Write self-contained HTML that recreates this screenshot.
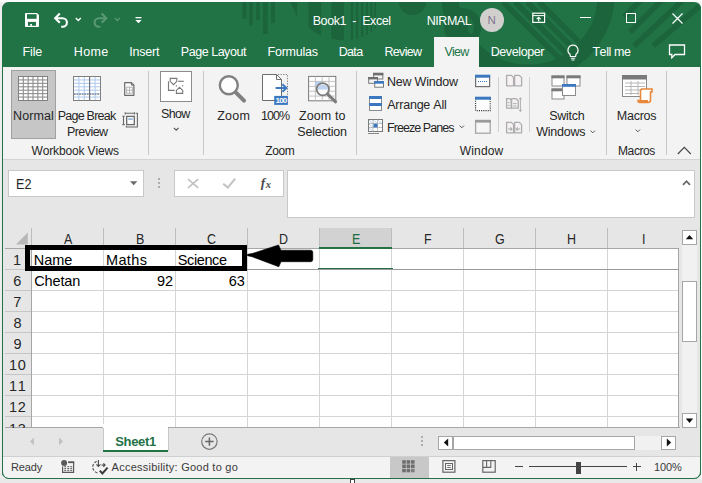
<!DOCTYPE html>
<html lang="en"><head><meta charset="utf-8"><title>Book1 - Excel</title>
<style>
html,body{margin:0;padding:0}
body{width:702px;height:483px;overflow:hidden;background:#fff;position:relative;font-family:"Liberation Sans",sans-serif;font-kerning:none}
#app{position:absolute;left:0;top:0;width:702px;height:483px;overflow:hidden}
#app div,#app svg,#app span{position:absolute;display:block}
#app span{white-space:pre;line-height:1;margin:0;padding:0}
</style></head><body><div id="app">
<div style="left:0px;top:0px;width:702px;height:483px;background:#ededed;"></div>
<div style="left:0px;top:0px;width:702px;height:2.2px;background:#fbfbfb;"></div>
<div style="left:701px;top:0px;width:1px;height:483px;background:#fdfdfd;"></div>
<div style="left:0px;top:479px;width:702px;height:4px;background:#e9e9e9;"></div>
<div style="left:2px;top:2px;width:699px;height:477px;background:#217346;border-radius:7px 7px 7px 7px;overflow:hidden">
<svg style="left:0;top:0" width="699" height="66" viewBox="2 2 699 66"><g fill="#1c643c"><rect x="242.5" y="2" width="4" height="16.7"/><rect x="249.4" y="2" width="3.4" height="23.5"/><rect x="256.2" y="2" width="3.4" height="18"/><rect x="263" y="2" width="4.6" height="32"/><rect x="271" y="2" width="4" height="20.8"/><path d="M290.4 2 H297.2 V17 Z"/><path d="M308.6 2 H321.2 V35.5 Q314 32.5 308.6 27.5 Z"/><path d="M331.4 2 H344 V40 Q337 40 331.4 38.5 Z"/><rect x="350.8" y="2" width="2.3" height="38"/><rect x="356" y="2" width="2.2" height="37"/><rect x="361" y="2" width="2.3" height="35"/><rect x="366" y="2" width="2" height="33"/><rect x="370.5" y="2" width="1.8" height="30"/><rect x="374.5" y="2" width="1.5" height="27"/><ellipse cx="412.5" cy="2" rx="13.5" ry="13"/><circle cx="462.7" cy="27" r="5.7"/></g><g fill="none" stroke="#1c643c"><circle cx="462.7" cy="27" r="15" stroke-width="7.5"/><circle cx="528" cy="-5" r="78" stroke-width="17"/></g><g stroke="#1c643c" stroke-width="5.5" fill="none"><path d="M503 2 L561 60"/><path d="M515 2 L569 56"/><path d="M527 2 L577 52"/><path d="M539 2 L585 48"/><path d="M641 0 L624 17"/><path d="M662 0 L630 32"/><path d="M683 0 L634 46"/><path d="M702 4 L653 46"/></g></svg>
<div style="left:1px;top:65px;width:697px;height:92.2px;background:#f3f3f3"></div>
<div style="left:1px;top:157.2px;width:697px;height:320px;background:#e6e6e6"></div>
<div style="left:1px;top:454px;width:697px;height:22px;background:#f3f3f3"></div>
</div>
<div style="left:350px;top:479px;width:5px;height:6px;background:#fff;border:1px solid #444;box-sizing:border-box"></div>
<svg style="left:24px;top:12px;" width="17" height="16" viewBox="24 12 17 16"><path d="M25.8 13 H37 L39 15 V26.2 Q39 27 38.2 27 H25.8 Q25 27 25 26.2 V13.8 Q25 13 25.8 13 Z" fill="#fff"/><rect x="27" y="14.2" width="9.6" height="4.6" fill="#217346"/><rect x="28" y="21.9" width="8" height="3.9" fill="#217346"/><rect x="30.2" y="24" width="1.8" height="1.8" fill="#fff"/></svg>
<svg style="left:53px;top:12px;" width="17" height="16" viewBox="0 0 17 16"><path d="M3 6.2 H9.6 A4.3 4.3 0 0 1 9.6 14.8 H8.2" fill="none" stroke="#fff" stroke-width="2.1"/><path d="M6.8 1.6 L2.2 6.2 L6.8 10.8" fill="none" stroke="#fff" stroke-width="2.1"/></svg>
<svg style="left:75px;top:17px;" width="7" height="5" viewBox="0 0 7 5"><path d="M0.8 1 L3.3 3.5 L5.8 1" fill="none" stroke="#fff" stroke-width="1.3"/></svg>
<svg style="left:92px;top:12px;" width="17" height="16" viewBox="0 0 17 16"><path d="M13.5 6.2 H6.9 A4.3 4.3 0 0 0 6.9 14.8 H8.3" fill="none" stroke="#5a9875" stroke-width="2.1"/><path d="M9.7 1.6 L14.3 6.2 L9.7 10.8" fill="none" stroke="#5a9875" stroke-width="2.1"/></svg>
<svg style="left:114px;top:17px;" width="7" height="5" viewBox="0 0 7 5"><path d="M0.8 1 L3.3 3.5 L5.8 1" fill="none" stroke="#5a9875" stroke-width="1.3"/></svg>
<svg style="left:135px;top:16px;" width="8" height="8" viewBox="0 0 8 8"><rect x="0.5" y="1" width="6" height="1.3" fill="#fff"/><path d="M0.3 4 H6.7 L3.5 7.2 Z" fill="#fff"/></svg>
<span style="left:312.67px;top:14px;line-height:14px;font-size:12.5px;color:#ffffff;letter-spacing:-0.401px;">Book1  -  Excel</span>
<span style="left:426.77px;top:14px;line-height:14px;font-size:12.5px;color:#ffffff;letter-spacing:-0.459px;">NIRMAL</span>
<div style="left:480px;top:8px;width:24px;height:24px;border-radius:50%;background:#d2d0ce"></div>
<span style="left:487.56px;top:14px;line-height:12px;font-size:11.5px;color:#80778f;letter-spacing:0.000px;">N</span>
<svg style="left:531px;top:12px;" width="16" height="12" viewBox="0 0 16 12"><rect x="1.8" y="1.2" width="11.8" height="9.2" fill="none" stroke="#fff" stroke-width="1.2"/><path d="M1.8 3.6 H13.6" stroke="#fff" stroke-width="1"/><path d="M7.7 9.4 V5.4 M5.7 7.2 L7.7 5.2 L9.7 7.2" fill="none" stroke="#fff" stroke-width="1.1"/></svg>
<div style="left:580px;top:17px;width:10.5px;height:1.2px;background:#ffffff;"></div>
<div style="left:626.3px;top:13px;width:7.6px;height:7.6px;border:1.1px solid #fff"></div>
<svg style="left:672px;top:13px;" width="11" height="11" viewBox="0 0 11 11"><path d="M0.5 0.5 L10.5 10.5 M10.5 0.5 L0.5 10.5" stroke="#fff" stroke-width="1.2"/></svg>
<span style="left:22.57px;top:45px;line-height:14px;font-size:12.5px;color:#ffffff;letter-spacing:-0.158px;">File</span>
<span style="left:73.77px;top:45px;line-height:14px;font-size:12.5px;color:#ffffff;letter-spacing:0.346px;">Home</span>
<span style="left:129.15px;top:45px;line-height:14px;font-size:12.5px;color:#ffffff;letter-spacing:-0.204px;">Insert</span>
<span style="left:180.77px;top:45px;line-height:14px;font-size:12.5px;color:#ffffff;letter-spacing:-0.459px;">Page Layout</span>
<span style="left:267.57px;top:45px;line-height:14px;font-size:12.5px;color:#ffffff;letter-spacing:-0.245px;">Formulas</span>
<span style="left:338.77px;top:45px;line-height:14px;font-size:12.5px;color:#ffffff;letter-spacing:-0.694px;">Data</span>
<span style="left:384.57px;top:45px;line-height:14px;font-size:12.5px;color:#ffffff;letter-spacing:-0.721px;">Review</span>
<div style="left:434px;top:37px;width:45.2px;height:31px;background:#f3f3f3;"></div>
<span style="left:444.55px;top:45px;line-height:14px;font-size:12.5px;color:#217346;letter-spacing:-0.823px;">View</span>
<span style="left:490.67px;top:45px;line-height:14px;font-size:12.5px;color:#ffffff;letter-spacing:-0.394px;">Developer</span>
<svg style="left:566px;top:44px;" width="14" height="17" viewBox="0 0 14 17"><path d="M7 1.2 A5 5 0 0 1 10 10.2 L9.6 12.5 H4.4 L4 10.2 A5 5 0 0 1 7 1.2 Z" fill="none" stroke="#fff" stroke-width="1.2"/><path d="M4.8 14.3 H9.2 M5.5 16 H8.5" stroke="#fff" stroke-width="1.1"/></svg>
<span style="left:592.42px;top:45px;line-height:14px;font-size:12.5px;color:#ffffff;letter-spacing:-0.425px;">Tell me</span>
<svg style="left:668px;top:44px;" width="18" height="15" viewBox="0 0 18 15"><path d="M1.5 1 H16.5 V10.5 H7 L3.8 13.8 V10.5 H1.5 Z" fill="none" stroke="#fff" stroke-width="1.3"/></svg>
<div style="left:148.0px;top:71px;width:1px;height:84px;background:#c8c8c8;"></div>
<div style="left:203.0px;top:71px;width:1px;height:84px;background:#c8c8c8;"></div>
<div style="left:355.8px;top:71px;width:1px;height:84px;background:#c8c8c8;"></div>
<div style="left:605.8px;top:71px;width:1px;height:84px;background:#c8c8c8;"></div>
<div style="left:665.8px;top:71px;width:1px;height:84px;background:#c8c8c8;"></div>
<div style="left:498px;top:77px;width:1px;height:55px;background:#d0d0d0;"></div>
<div style="left:529.2px;top:77px;width:1px;height:55px;background:#d0d0d0;"></div>
<div style="left:11px;top:70px;width:45px;height:68.5px;background:#c6c6c6;border:1px solid #a0a0a0;box-sizing:border-box"></div>
<svg style="left:18px;top:76px;" width="30" height="25" viewBox="0 0 30 25"><rect x="0.5" y="0.5" width="29" height="24" fill="#fff" stroke="#808080" stroke-width="1"/><path d="M1 3.93 H29" stroke="#8e8e8e" stroke-width="1.1"/><path d="M1 7.36 H29" stroke="#8e8e8e" stroke-width="1.1"/><path d="M1 10.79 H29" stroke="#8e8e8e" stroke-width="1.1"/><path d="M1 14.21 H29" stroke="#8e8e8e" stroke-width="1.1"/><path d="M1 17.64 H29" stroke="#8e8e8e" stroke-width="1.1"/><path d="M1 21.07 H29" stroke="#8e8e8e" stroke-width="1.1"/><path d="M5.33 1 V24" stroke="#8e8e8e" stroke-width="1.1"/><path d="M10.17 1 V24" stroke="#8e8e8e" stroke-width="1.1"/><path d="M15.00 1 V24" stroke="#8e8e8e" stroke-width="1.1"/><path d="M19.83 1 V24" stroke="#8e8e8e" stroke-width="1.1"/><path d="M24.67 1 V24" stroke="#8e8e8e" stroke-width="1.1"/></svg>
<span style="left:13.07px;top:109px;line-height:14px;font-size:12.5px;color:#262626;letter-spacing:0.073px;">Normal</span>
<svg style="left:73px;top:76px;" width="28" height="25" viewBox="0 0 28 25"><rect x="0.5" y="0.5" width="27" height="24" fill="#fff" stroke="#808080" stroke-width="1"/><path d="M1 3.93 H27" stroke="#b4cdee" stroke-width="1.1"/><path d="M1 7.36 H27" stroke="#b4cdee" stroke-width="1.1"/><path d="M1 10.79 H27" stroke="#b4cdee" stroke-width="1.1"/><path d="M1 14.21 H27" stroke="#b4cdee" stroke-width="1.1"/><path d="M1 17.64 H27" stroke="#b4cdee" stroke-width="1.1"/><path d="M1 21.07 H27" stroke="#b4cdee" stroke-width="1.1"/><path d="M5.90 1 V24" stroke="#b4cdee" stroke-width="1.1"/><path d="M11.30 1 V24" stroke="#b4cdee" stroke-width="1.1"/><path d="M16.70 1 V24" stroke="#b4cdee" stroke-width="1.1"/><path d="M22.10 1 V24" stroke="#b4cdee" stroke-width="1.1"/><path d="M1 18.2 H27" stroke="#555" stroke-width="0.9" stroke-dasharray="1.6 1"/><path d="M16.6 1 V24" stroke="#666" stroke-width="1"/></svg>
<span style="left:57.67px;top:109px;line-height:14px;font-size:12.5px;color:#262626;letter-spacing:-0.747px;">Page Break</span>
<span style="left:66.97px;top:125px;line-height:14px;font-size:12.5px;color:#262626;letter-spacing:-0.562px;">Preview</span>
<svg style="left:122px;top:80px;" width="17" height="18" viewBox="122 80 17 18"><path d="M124.7 82.6 H131.4 L133.9 85.1 V95.3 H124.7 Z" fill="#fbfbfb" stroke="#6a6a6a" stroke-width="1.2" stroke-linejoin="round"/><path d="M131.4 82.6 V85.1 H133.9" fill="none" stroke="#6a6a6a" stroke-width="1"/><rect x="126.6" y="87.2" width="5.8" height="6" fill="#fff" stroke="#b4b4b4" stroke-width="1"/><path d="M129.5 87.2 V93.2 M126.6 90.2 H132.4" stroke="#b4b4b4" stroke-width="1"/></svg>
<svg style="left:121px;top:110px;" width="19" height="20" viewBox="121 110 19 20"><path d="M125.2 113.3 H134.4 M125.2 112.2 V114.4 M134.4 112.2 V114.4" fill="none" stroke="#6a6a6a" stroke-width="1.1"/><path d="M123.5 116.2 V124.6 M122.3 116.2 H124.8 M122.3 124.6 H124.8" fill="none" stroke="#6a6a6a" stroke-width="1.1"/><path d="M135.6 113.3 H137.4 V127 H126.4 V125.8" fill="none" stroke="#6a6a6a" stroke-width="1.1"/><rect x="126.7" y="116.4" width="7.6" height="8.2" fill="#fdfdfd" stroke="#6a6a6a" stroke-width="1.3"/><rect x="128.2" y="118.2" width="4.6" height="1.8" fill="#9dbce0"/></svg>
<span style="left:31.55px;top:144px;line-height:14px;font-size:12px;color:#262626;letter-spacing:-0.145px;">Workbook Views</span>
<div style="left:160px;top:71px;width:32px;height:31px;background:#fff;border:1px solid #8c8c8c;box-sizing:border-box"></div>
<svg style="left:165px;top:75px;" width="22" height="22" viewBox="165 75 22 22"><g fill="none" stroke="#7a7a7a" stroke-width="1.15"><path d="M170.2 78.4 H176.8 V81.3 L173.5 84.6 L170.2 81.3 Z"/><path d="M168.5 81.2 V90.4 H174.7"/><path d="M178.2 81.3 H183.8"/><path d="M176.4 85.2 V86.6 M182.6 85.2 V86.6"/><path d="M176.4 93.3 V90.4 L179.5 87.4 L182.7 90.4 V93.3 Z"/></g></svg>
<span style="left:161.03px;top:107px;line-height:14px;font-size:12.5px;color:#262626;letter-spacing:-0.648px;">Show</span>
<svg style="left:173px;top:127px;" width="7" height="5" viewBox="0 0 7 5"><path d="M0.8 0.8 L3.2 3.2 L5.6 0.8" fill="none" stroke="#555" stroke-width="1.1"/></svg>
<svg style="left:217px;top:74px;" width="31" height="29" viewBox="0 0 31 29"><circle cx="11.8" cy="11.3" r="9" fill="#fdfdfd" stroke="#808080" stroke-width="2.4"/><path d="M19 18.6 L27 26.6" stroke="#808080" stroke-width="4" stroke-linecap="round"/></svg>
<span style="left:217.30px;top:109px;line-height:14px;font-size:12.5px;color:#262626;letter-spacing:0.189px;">Zoom</span>
<svg style="left:261px;top:73px;" width="28" height="33" viewBox="261 73 28 33"><path d="M262.5 74.5 H276.5 L281.5 79.5 V100.5 H262.5 Z" fill="#fdfdfd" stroke="#6e6e6e" stroke-width="1"/><path d="M276.5 74.5 V79.5 H281.5" fill="none" stroke="#6e6e6e" stroke-width="1"/><path d="M278 74.5 H287.5 V95" fill="none" stroke="#7a7a7a" stroke-width="1" stroke-dasharray="1.2 1.4"/><path d="M275.6 88 H286.2 M282.4 84.2 L286.4 88 L282.4 91.8" fill="none" stroke="#3b78c0" stroke-width="1.9"/><rect x="274.2" y="95.9" width="13.7" height="9" fill="#3b78c0"/></svg>
<span style="left:275.60px;top:96px;line-height:9px;font-size:8px;font-weight:700;color:#fff;letter-spacing:-0.864px;">100</span>
<span style="left:260.95px;top:109px;line-height:14px;font-size:12.5px;color:#262626;letter-spacing:-0.896px;">100%</span>
<svg style="left:307px;top:75px;" width="32" height="30" viewBox="307 75 32 30"><rect x="308.6" y="76.4" width="27.2" height="24.4" fill="#fdfdfd" stroke="#7a7a7a" stroke-width="1"/><path d="M309 81.4 H335.5 M309 86.3 H335.5 M309 91.2 H335.5 M309 96.1 H335.5 M315.4 76.6 V100.6 M322.2 76.6 V100.6 M329 76.6 V100.6" stroke="#bcbcbc" stroke-width="0.9"/><rect x="315.6" y="81.6" width="6.4" height="4.6" fill="#b4cdee"/><circle cx="322.8" cy="89.2" r="6.1" fill="#fafafa" stroke="#7c7c7c" stroke-width="1.8"/><path d="M317.6 89.6 A5.2 5.2 0 0 1 328 89.6 Z" fill="#bdd3ef"/><path d="M327.6 94.2 L335.6 101.8" stroke="#7c7c7c" stroke-width="3" stroke-linecap="round"/></svg>
<span style="left:299.10px;top:109px;line-height:14px;font-size:12.5px;color:#262626;letter-spacing:0.077px;">Zoom to</span>
<span style="left:297.33px;top:125px;line-height:14px;font-size:12.5px;color:#262626;letter-spacing:-0.220px;">Selection</span>
<span style="left:265.22px;top:144px;line-height:14px;font-size:12px;color:#262626;letter-spacing:-0.405px;">Zoom</span>
<svg style="left:367px;top:72px;" width="18" height="17" viewBox="367 72 18 17"><rect x="373.6" y="73.4" width="9.2" height="5.6" fill="#f3f3f3" stroke="#7a7a7a" stroke-width="1"/><rect x="373.1" y="72.8" width="10.2" height="2.6" fill="#6e6e6e"/><rect x="368.7" y="77.5" width="8.8" height="5.8" fill="#f3f3f3" stroke="#7a7a7a" stroke-width="1"/><rect x="368.2" y="77" width="9.8" height="2.4" fill="#6e6e6e"/><rect x="374.7" y="81.6" width="8.8" height="5.6" fill="#fff" stroke="#7a7a7a" stroke-width="1"/><rect x="374.2" y="81.1" width="9.8" height="2.6" fill="#3b78c0"/></svg>
<span style="left:386.97px;top:75px;line-height:14px;font-size:12.5px;color:#262626;letter-spacing:-0.216px;">New Window</span>
<svg style="left:368px;top:95px;" width="15" height="17" viewBox="0 0 15 17"><rect x="1.5" y="1.5" width="12" height="14" fill="#fff" stroke="#8a8a8a" stroke-width="1"/><rect x="1" y="1" width="13" height="3" fill="#3b78c0"/><rect x="1" y="8" width="13" height="3" fill="#3b78c0"/></svg>
<span style="left:387.28px;top:98px;line-height:14px;font-size:12.5px;color:#262626;letter-spacing:-0.238px;">Arrange All</span>
<svg style="left:367px;top:118px;" width="18" height="17" viewBox="0 0 18 17"><rect x="1.5" y="1.5" width="14" height="12" fill="#fff" stroke="#7a7a7a" stroke-width="1"/><path d="M1.5 5.5 H15.5 M1.5 9.5 H15.5 M6 1.5 V13.5 M10.5 1.5 V13.5" stroke="#8a8a8a" stroke-width="0.9" stroke-dasharray="1.2 0.8"/><rect x="6.5" y="5.8" width="4" height="3.6" fill="#3b78c0"/><path d="M2 2 L6 5.5 M6 2 L10.5 5.5 M10.5 2 L15 5.5 M2 6 L6 9.5 M2 10 L6 13.5" stroke="#a9c6e8" stroke-width="0.8"/><path d="M1 15.5 H12" stroke="#7a7a7a" stroke-width="0.9"/></svg>
<span style="left:386.97px;top:121px;line-height:14px;font-size:12.5px;color:#262626;letter-spacing:-0.932px;">Freeze Panes</span>
<svg style="left:459px;top:125px;" width="6" height="4" viewBox="0 0 6 4"><path d="M0.6 0.6 L2.8 2.8 L5 0.6" fill="none" stroke="#555" stroke-width="1"/></svg>
<svg style="left:474px;top:74px;" width="18" height="14" viewBox="0 0 18 14"><rect x="1.6" y="1.8" width="14" height="10.8" fill="#fdfdfd" stroke="#6e6e6e" stroke-width="1.2"/><rect x="1" y="0.7" width="15.2" height="3" fill="#3b78c0"/><path d="M4 7.5 H14" stroke="#3b78c0" stroke-width="1" stroke-dasharray="1 1"/></svg>
<svg style="left:474px;top:96px;" width="18" height="16" viewBox="0 0 18 16"><rect x="1.6" y="2" width="14.6" height="12.6" fill="#fdfdfd" stroke="#333" stroke-width="1.1" stroke-dasharray="1.1 1.1"/><rect x="1" y="0.7" width="16" height="3" fill="#3b78c0"/></svg>
<svg style="left:474px;top:119px;" width="18" height="16" viewBox="0 0 18 16"><rect x="1.6" y="1.8" width="14.6" height="12.4" fill="#f6f6f6" stroke="#a6a6a6" stroke-width="1.3"/><rect x="1" y="0.8" width="16" height="2.8" fill="#9a9a9a"/></svg>
<svg style="left:505px;top:74px;" width="19" height="14" viewBox="0 0 19 14"><path d="M1.6 1.4 H6.3999999999999995 L8.6 3.6 V11.8 H1.6 Z" fill="#f5f1f5" stroke="#adadad" stroke-width="1.3" stroke-linejoin="round"/><path d="M9.6 1.4 H14.400000000000002 L16.6 3.6 V11.8 H9.6 Z" fill="#f5f1f5" stroke="#adadad" stroke-width="1.3" stroke-linejoin="round"/></svg>
<svg style="left:505px;top:97px;" width="19" height="17" viewBox="0 0 19 17"><path d="M1.6 1.6 H4.699999999999999 L6.199999999999999 3.1 V11.2 H1.6 Z" fill="#f5f1f5" stroke="#adadad" stroke-width="1.3" stroke-linejoin="round"/><path d="M6.6 1.6 H11.0 L13.2 3.8000000000000003 V11.2 H6.6 Z" fill="#f5f1f5" stroke="#adadad" stroke-width="1.3" stroke-linejoin="round"/><path d="M2.8 5.6 H4.6 M2.8 8.4 H4.6 M8.2 6.6 H11.6 M8.2 9 H11.6" stroke="#adadad" stroke-width="1"/><path d="M15.4 0.6 V14.6 M14 2.4 L15.4 0.8 L16.8 2.4 M14 12.8 L15.4 14.4 L16.8 12.8" fill="none" stroke="#adadad" stroke-width="1"/></svg>
<svg style="left:505px;top:121px;" width="19" height="14" viewBox="0 0 19 14"><path d="M1.6 1.4 H6.3999999999999995 L8.6 3.6 V11.8 H1.6 Z" fill="#f5f1f5" stroke="#adadad" stroke-width="1.3" stroke-linejoin="round"/><path d="M9.6 1.4 H14.400000000000002 L16.6 3.6 V11.8 H9.6 Z" fill="#f5f1f5" stroke="#adadad" stroke-width="1.3" stroke-linejoin="round"/><path d="M3 8 H7 M5.4 6.4 L7 8 L5.4 9.6 M15.2 8 H11.2 M12.8 6.4 L11.2 8 L12.8 9.6" fill="none" stroke="#adadad" stroke-width="1.1"/></svg>
<span style="left:459.75px;top:144px;line-height:14px;font-size:12px;color:#262626;letter-spacing:0.167px;">Window</span>
<svg style="left:550.7px;top:75px;" width="32" height="27" viewBox="0 0 32 27"><rect x="1" y="1" width="12" height="10" fill="#fff" stroke="#8a8a8a" stroke-width="1"/><rect x="0.5" y="0.5" width="13" height="2.8" fill="#7a7a7a"/><rect x="16" y="1" width="13" height="10" fill="#fff" stroke="#8a8a8a" stroke-width="1"/><rect x="15.5" y="0.5" width="14" height="2.8" fill="#7a7a7a"/><rect x="1" y="14" width="12" height="10" fill="#fff" stroke="#8a8a8a" stroke-width="1"/><rect x="0.5" y="13.5" width="13" height="2.8" fill="#7a7a7a"/><rect x="11.5" y="9.5" width="13" height="11" fill="#fff" stroke="#8a8a8a" stroke-width="1"/><rect x="11" y="9" width="14" height="2.8" fill="#3b78c0"/></svg>
<span style="left:549.13px;top:109px;line-height:14px;font-size:12.5px;color:#262626;letter-spacing:-0.270px;">Switch</span>
<span style="left:536.25px;top:125px;line-height:14px;font-size:12.5px;color:#262626;letter-spacing:-0.235px;">Windows</span>
<svg style="left:589.5px;top:129.5px;" width="6" height="4" viewBox="0 0 6 4"><path d="M0.6 0.6 L2.8 2.8 L5 0.6" fill="none" stroke="#555" stroke-width="1"/></svg>
<svg style="left:621px;top:74px;" width="34" height="30" viewBox="0 0 34 30"><rect x="1.5" y="1.5" width="24" height="21" fill="#fff" stroke="#8a8a8a" stroke-width="1"/><rect x="1" y="1" width="25" height="4.5" fill="#7a7a7a"/><path d="M4 9 H24 M4 12.5 H24 M4 16 H24 M4 19.5 H18 M10 7 V21 M17 7 V21" stroke="#b0b0b0" stroke-width="0.9"/><path d="M20 15 H31 V18 H29.5 V26 Q29.5 28.5 27 28.5 H19 Q17 28.5 17 26.5 H19.5 V17 Q19.5 15 21.5 15 Z" fill="#fff" stroke="#e8873a" stroke-width="1.6"/><path d="M17 26 H27 V28.5 H19 Z" fill="#e8873a"/></svg>
<span style="left:616.87px;top:109px;line-height:14px;font-size:12.5px;color:#262626;letter-spacing:-0.261px;">Macros</span>
<svg style="left:634.5px;top:129.3px;" width="6" height="4" viewBox="0 0 6 4"><path d="M0.6 0.6 L2.8 2.8 L5 0.6" fill="none" stroke="#555" stroke-width="1"/></svg>
<span style="left:618.02px;top:144px;line-height:14px;font-size:12px;color:#262626;letter-spacing:-0.405px;">Macros</span>
<svg style="left:677px;top:146px;" width="15" height="9" viewBox="0 0 15 9"><path d="M0.8 8 L7.3 1.3 L13.8 8" fill="none" stroke="#444" stroke-width="1.1"/></svg>
<div style="left:3px;top:158.7px;width:697px;height:1px;background:#d4d4d4;"></div>
<div style="left:8.2px;top:170.3px;width:135.4px;height:26.3px;background:#fff;border:1px solid #c8c8c8;box-sizing:border-box"></div>
<span style="left:15.57px;top:176px;line-height:16px;font-size:14px;color:#262626;letter-spacing:0.172px;transform:scaleX(0.9);transform-origin:0 0;">E2</span>
<svg style="left:130px;top:180.6px;" width="8" height="5" viewBox="0 0 8 5"><path d="M0 0.3 H7.4 L3.7 4.2 Z" fill="#6a6a6a"/></svg>
<div style="left:158px;top:178px;width:2px;height:2px;background:#adadad;"></div>
<div style="left:158px;top:182px;width:2px;height:2px;background:#adadad;"></div>
<div style="left:158px;top:186px;width:2px;height:2px;background:#adadad;"></div>
<div style="left:174.3px;top:170.3px;width:109.4px;height:26.3px;background:#fff;border:1px solid #c8c8c8;box-sizing:border-box"></div>
<svg style="left:187px;top:178px;" width="13" height="11" viewBox="0 0 13 11"><path d="M1 1.2 L11.2 9.8 M11.2 1.2 L1 9.8" stroke="#c2c2c2" stroke-width="1.7"/></svg>
<svg style="left:222px;top:177px;" width="15" height="13" viewBox="0 0 15 13"><path d="M1.2 6.8 L5.8 10.6 L13.2 1.6" fill="none" stroke="#c2c2c2" stroke-width="2"/></svg>
<span style="left:260.7px;top:175px;line-height:15px;font-size:13.5px;font-family:'Liberation Serif',serif;font-weight:700;font-style:italic;color:#4a4a4a;letter-spacing:0">f<span style="position:static;display:inline;font-size:10.5px;line-height:12px;vertical-align:-1px;margin-left:0.6px">x</span></span>
<div style="left:287.3px;top:170.3px;width:407.6px;height:48px;background:#fff;border:1px solid #c8c8c8;box-sizing:border-box"></div>
<svg style="left:682px;top:179px;" width="9" height="7" viewBox="0 0 9 7"><path d="M1 5.8 L4.5 2.2 L8 5.8" fill="none" stroke="#666" stroke-width="1.7"/></svg>
<div style="left:5px;top:248px;width:674px;height:179.5px;background:#fff;"></div>
<div style="left:5px;top:248px;width:26.5px;height:179.5px;background:#e6e6e6;"></div>
<div style="left:319.5px;top:228px;width:72.5px;height:20px;background:#d2d2d2;"></div>
<div style="left:103.0px;top:248px;width:1px;height:179.5px;background:#d4d4d4;"></div>
<div style="left:175.0px;top:248px;width:1px;height:179.5px;background:#d4d4d4;"></div>
<div style="left:247.0px;top:248px;width:1px;height:179.5px;background:#d4d4d4;"></div>
<div style="left:319.0px;top:248px;width:1px;height:179.5px;background:#d4d4d4;"></div>
<div style="left:391.0px;top:248px;width:1px;height:179.5px;background:#d4d4d4;"></div>
<div style="left:463.0px;top:248px;width:1px;height:179.5px;background:#d4d4d4;"></div>
<div style="left:535.0px;top:248px;width:1px;height:179.5px;background:#d4d4d4;"></div>
<div style="left:607.0px;top:248px;width:1px;height:179.5px;background:#d4d4d4;"></div>
<div style="left:31.5px;top:268.5px;width:647.5px;height:1px;background:#d4d4d4;"></div>
<div style="left:31.5px;top:289.7px;width:647.5px;height:1px;background:#d4d4d4;"></div>
<div style="left:31.5px;top:310.8px;width:647.5px;height:1px;background:#d4d4d4;"></div>
<div style="left:31.5px;top:331.9px;width:647.5px;height:1px;background:#d4d4d4;"></div>
<div style="left:31.5px;top:353.0px;width:647.5px;height:1px;background:#d4d4d4;"></div>
<div style="left:31.5px;top:374.0px;width:647.5px;height:1px;background:#d4d4d4;"></div>
<div style="left:31.5px;top:395.1px;width:647.5px;height:1px;background:#d4d4d4;"></div>
<div style="left:31.5px;top:416.2px;width:647.5px;height:1px;background:#d4d4d4;"></div>
<div style="left:31.5px;top:437.3px;width:647.5px;height:1px;background:#d4d4d4;"></div>
<div style="left:31.0px;top:228px;width:1px;height:20px;background:#bdbdbd;"></div>
<div style="left:103.0px;top:228px;width:1px;height:20px;background:#bdbdbd;"></div>
<div style="left:175.0px;top:228px;width:1px;height:20px;background:#bdbdbd;"></div>
<div style="left:247.0px;top:228px;width:1px;height:20px;background:#bdbdbd;"></div>
<div style="left:319.0px;top:228px;width:1px;height:20px;background:#bdbdbd;"></div>
<div style="left:391.0px;top:228px;width:1px;height:20px;background:#bdbdbd;"></div>
<div style="left:463.0px;top:228px;width:1px;height:20px;background:#bdbdbd;"></div>
<div style="left:535.0px;top:228px;width:1px;height:20px;background:#bdbdbd;"></div>
<div style="left:607.0px;top:228px;width:1px;height:20px;background:#bdbdbd;"></div>
<div style="left:5px;top:268.5px;width:26.5px;height:1px;background:#c6c6c6;"></div>
<div style="left:5px;top:289.7px;width:26.5px;height:1px;background:#c6c6c6;"></div>
<div style="left:5px;top:310.8px;width:26.5px;height:1px;background:#c6c6c6;"></div>
<div style="left:5px;top:331.9px;width:26.5px;height:1px;background:#c6c6c6;"></div>
<div style="left:5px;top:353.0px;width:26.5px;height:1px;background:#c6c6c6;"></div>
<div style="left:5px;top:374.0px;width:26.5px;height:1px;background:#c6c6c6;"></div>
<div style="left:5px;top:395.1px;width:26.5px;height:1px;background:#c6c6c6;"></div>
<div style="left:5px;top:416.2px;width:26.5px;height:1px;background:#c6c6c6;"></div>
<div style="left:5px;top:437.3px;width:26.5px;height:1px;background:#c6c6c6;"></div>
<div style="left:5px;top:247.5px;width:674px;height:1px;background:#a6a6a6;"></div>
<div style="left:31px;top:248px;width:1px;height:179.5px;background:#a6a6a6;"></div>
<div style="left:31.5px;top:268.5px;width:647.5px;height:1px;background:#9a9a9a;"></div>
<div style="left:678.2px;top:248px;width:1.3px;height:179.5px;background:#a4a4a4;"></div>
<div style="left:5px;top:427px;width:675px;height:1px;background:#a6a6a6;"></div>
<div style="left:319.2px;top:246.9px;width:72.8px;height:1.7px;background:#217346;"></div>
<div style="left:318px;top:267.9px;width:75.2px;height:1.5px;background:#217346;"></div>
<svg style="left:15px;top:232px;" width="14" height="14" viewBox="0 0 14 14"><path d="M12.8 0.6 V12.4 H0.8 Z" fill="#b8b8b8"/></svg>
<span style="left:63.84px;top:231px;line-height:16px;font-size:14.5px;color:#262626;letter-spacing:0.000px;transform:scaleX(0.86);transform-origin:0 0;">A</span>
<span style="left:135.66px;top:231px;line-height:16px;font-size:14.5px;color:#262626;letter-spacing:0.000px;transform:scaleX(0.86);transform-origin:0 0;">B</span>
<span style="left:207.42px;top:231px;line-height:16px;font-size:14.5px;color:#262626;letter-spacing:0.000px;transform:scaleX(0.86);transform-origin:0 0;">C</span>
<span style="left:279.28px;top:231px;line-height:16px;font-size:14.5px;color:#262626;letter-spacing:0.000px;transform:scaleX(0.86);transform-origin:0 0;">D</span>
<span style="left:351.60px;top:231px;line-height:16px;font-size:14.5px;color:#1f6b41;letter-spacing:0.000px;transform:scaleX(0.86);transform-origin:0 0;">E</span>
<span style="left:423.93px;top:231px;line-height:16px;font-size:14.5px;color:#262626;letter-spacing:0.000px;transform:scaleX(0.86);transform-origin:0 0;">F</span>
<span style="left:495.30px;top:231px;line-height:16px;font-size:14.5px;color:#262626;letter-spacing:0.000px;transform:scaleX(0.86);transform-origin:0 0;">G</span>
<span style="left:567.49px;top:231px;line-height:16px;font-size:14.5px;color:#262626;letter-spacing:0.000px;transform:scaleX(0.86);transform-origin:0 0;">H</span>
<span style="left:642.02px;top:231px;line-height:16px;font-size:14.5px;color:#262626;letter-spacing:0.000px;transform:scaleX(0.86);transform-origin:0 0;">I</span>
<span style="left:13.00px;top:252px;line-height:16px;font-size:14.5px;color:#262626;letter-spacing:0.734px;">1</span>
<span style="left:13.36px;top:273px;line-height:16px;font-size:14.5px;color:#262626;letter-spacing:0.295px;">6</span>
<span style="left:13.36px;top:294px;line-height:16px;font-size:14.5px;color:#262626;letter-spacing:0.395px;">7</span>
<span style="left:13.47px;top:315px;line-height:16px;font-size:14.5px;color:#262626;letter-spacing:0.182px;">8</span>
<span style="left:13.42px;top:336px;line-height:16px;font-size:14.5px;color:#262626;letter-spacing:0.288px;">9</span>
<span style="left:9.00px;top:357px;line-height:16px;font-size:14.5px;color:#262626;letter-spacing:0.630px;">10</span>
<span style="left:9.00px;top:378px;line-height:16px;font-size:14.5px;color:#262626;letter-spacing:0.772px;">11</span>
<span style="left:9.00px;top:399px;line-height:16px;font-size:14.5px;color:#262626;letter-spacing:0.793px;">12</span>
<span style="left:9.00px;top:421px;line-height:16px;font-size:14.5px;color:#262626;letter-spacing:0.701px;">13</span>
<span style="left:33.81px;top:252px;line-height:16px;font-size:14.5px;color:#000;letter-spacing:-0.085px;">Name</span>
<span style="left:106.01px;top:252px;line-height:16px;font-size:14.5px;color:#000;letter-spacing:0.353px;">Maths</span>
<span style="left:177.74px;top:252px;line-height:16px;font-size:14.5px;color:#000;letter-spacing:-0.382px;">Science</span>
<span style="left:34.26px;top:273px;line-height:16px;font-size:14.5px;color:#000;letter-spacing:-0.158px;">Chetan</span>
<span style="left:157.12px;top:273px;line-height:16px;font-size:14.5px;color:#000;letter-spacing:-0.232px;">92</span>
<span style="left:228.86px;top:273px;line-height:16px;font-size:14.5px;color:#000;letter-spacing:-0.067px;">63</span>
<div style="left:25.1px;top:245px;width:222.2px;height:25.8px;border:5.2px solid #000;box-sizing:border-box"></div>
<svg style="left:247px;top:243px;" width="68" height="26" viewBox="247 243 68 26"><path d="M247.5 254.3 L252 253.6 L278.5 245 L281 250.2 H310.6 Q312.8 250.2 312.8 252.4 V259.5 Q312.8 261.7 310.6 261.7 H281 L278.8 266.8 L252 256.7 L247.5 255.7 Z" fill="#000" stroke="#000" stroke-width="0.6" stroke-linejoin="round"/></svg>
<div style="left:3px;top:428px;width:697px;height:28px;background:#e6e6e6;"></div>
<div style="left:682px;top:230px;width:15px;height:198px;background:#f1f1f1;"></div>
<div style="left:682px;top:230px;width:15px;height:15px;background:#fff;border:1px solid #a6a6a6;box-sizing:border-box"></div>
<svg style="left:685px;top:234px;" width="9" height="6" viewBox="0 0 9 6"><path d="M0.8 5.2 H8.2 L4.5 0.9 Z" fill="#111"/></svg>
<div style="left:682px;top:281px;width:15px;height:61px;background:#fff;border:1px solid #a6a6a6;box-sizing:border-box"></div>
<div style="left:682px;top:413px;width:15px;height:15px;background:#fff;border:1px solid #a6a6a6;box-sizing:border-box"></div>
<svg style="left:685px;top:418px;" width="9" height="6" viewBox="0 0 9 6"><path d="M0.8 0.6 H8.2 L4.5 4.9 Z" fill="#111"/></svg>
<svg style="left:29px;top:437px;" width="6" height="9" viewBox="0 0 6 9"><path d="M5 0.5 V8.3 L0.9 4.4 Z" fill="#c2c2c2"/></svg>
<svg style="left:58px;top:437px;" width="6" height="9" viewBox="0 0 6 9"><path d="M1 0.5 V8.3 L5.1 4.4 Z" fill="#c2c2c2"/></svg>
<div style="left:103.4px;top:424px;width:64.5px;height:27px;background:#fff;"></div>
<div style="left:103px;top:428px;width:0.8px;height:23px;background:#c8c8c8;"></div>
<div style="left:167.6px;top:428px;width:0.8px;height:23px;background:#c8c8c8;"></div>
<div style="left:103.4px;top:450.3px;width:64.5px;height:2.2px;background:#217346;"></div>
<span style="left:115.13px;top:434px;line-height:15px;font-size:13px;font-weight:700;color:#1f7246;letter-spacing:-0.301px;">Sheet1</span>
<svg style="left:200px;top:432px;" width="19" height="19" viewBox="0 0 19 19"><circle cx="9.4" cy="9.6" r="7.7" fill="none" stroke="#7a7a7a" stroke-width="1.2"/><path d="M9.4 5.4 V13.8 M5.2 9.6 H13.6" stroke="#666" stroke-width="1.5"/></svg>
<div style="left:421px;top:436px;width:2px;height:2px;background:#adadad;"></div>
<div style="left:421px;top:440px;width:2px;height:2px;background:#adadad;"></div>
<div style="left:421px;top:444px;width:2px;height:2px;background:#adadad;"></div>
<div style="left:453px;top:435.5px;width:208px;height:14px;background:#f1f1f1;"></div>
<div style="left:438px;top:435.5px;width:15.4px;height:14px;background:#fff;border:1px solid #a6a6a6;box-sizing:border-box"></div>
<svg style="left:442.5px;top:438px;" width="6" height="9" viewBox="0 0 6 9"><path d="M5.2 0.5 V8.5 L0.8 4.5 Z" fill="#111"/></svg>
<div style="left:453px;top:435.5px;width:182px;height:14px;background:#fff;border:1px solid #a6a6a6;box-sizing:border-box"></div>
<div style="left:661px;top:435.5px;width:14.5px;height:14px;background:#fff;border:1px solid #a6a6a6;box-sizing:border-box"></div>
<svg style="left:666px;top:438px;" width="6" height="9" viewBox="0 0 6 9"><path d="M0.8 0.5 V8.5 L5.2 4.5 Z" fill="#111"/></svg>
<div style="left:3px;top:456px;width:697px;height:22px;background:#f3f3f3;"></div>
<div style="left:3px;top:455.5px;width:697px;height:1px;background:#d0d0d0;"></div>
<span style="left:11.00px;top:461px;line-height:12px;font-size:11px;color:#3a3a3a;letter-spacing:-0.143px;">Ready</span>
<svg style="left:60px;top:458px;" width="16" height="17" viewBox="60 458 16 17"><path d="M62.6 466.4 V472.4 H73.6 V462" fill="none" stroke="#5a5a5a" stroke-width="1.2"/><rect x="68.1" y="461.3" width="6.1" height="1.8" fill="#555"/><circle cx="64.1" cy="463" r="3" fill="#5a5a5a"/><g fill="#666"><rect x="64.3" y="466.1" width="1.8" height="1.1"/><rect x="67.3" y="466.1" width="1.9" height="1.1"/><rect x="70.3" y="466.1" width="1.9" height="1.1"/><rect x="64.3" y="468" width="1.8" height="1.1"/><rect x="67.3" y="468" width="1.9" height="1.1"/><rect x="70.3" y="468" width="1.9" height="1.1"/><rect x="64.3" y="469.9" width="1.8" height="1.1"/><rect x="67.3" y="469.9" width="1.9" height="1.1"/><rect x="70.3" y="469.9" width="1.9" height="1.1"/></g></svg>
<svg style="left:90px;top:458px;" width="20" height="18" viewBox="90 458 20 18"><path d="M96.6 461.4 A6 6 0 0 0 98.6 473" fill="none" stroke="#555" stroke-width="1.2" stroke-dasharray="2.6 1.5"/><path d="M98.4 460 V466.2 M96.4 464.4 L98.4 466.4 L100.4 464.4" fill="none" stroke="#4a4a4a" stroke-width="1.1"/><path d="M101.6 465.1 H105 M103.4 463.4 L105.1 465.1 L103.4 466.8" fill="none" stroke="#4a4a4a" stroke-width="1.1"/><path d="M99.8 470.6 L102.4 473.4 L107.6 467.6" fill="none" stroke="#3a3a3a" stroke-width="2"/></svg>
<span style="left:111.58px;top:461px;line-height:12px;font-size:11px;color:#3a3a3a;letter-spacing:0.239px;">Accessibility: Good to go</span>
<div style="left:389.5px;top:456.5px;width:39px;height:21.5px;background:#c8c8c8;"></div>
<svg style="left:401px;top:459px;" width="16" height="15" viewBox="401 459 16 15"><rect x="402.2" y="460.2" width="3.6" height="3.5" fill="#6e6e6e"/><rect x="402.2" y="464.5" width="3.6" height="3.5" fill="#6e6e6e"/><rect x="402.2" y="468.8" width="3.6" height="3.5" fill="#6e6e6e"/><rect x="406.6" y="460.2" width="3.6" height="3.5" fill="#6e6e6e"/><rect x="406.6" y="464.5" width="3.6" height="3.5" fill="#6e6e6e"/><rect x="406.6" y="468.8" width="3.6" height="3.5" fill="#6e6e6e"/><rect x="411.0" y="460.2" width="3.6" height="3.5" fill="#6e6e6e"/><rect x="411.0" y="464.5" width="3.6" height="3.5" fill="#6e6e6e"/><rect x="411.0" y="468.8" width="3.6" height="3.5" fill="#7e7e7e"/></svg>
<svg style="left:441px;top:459px;" width="16" height="15" viewBox="441 459 16 15"><rect x="442.9" y="460.6" width="12" height="11.6" fill="none" stroke="#666" stroke-width="1.2"/><rect x="445.5" y="463.5" width="7" height="6" fill="none" stroke="#666" stroke-width="1"/><path d="M447.2 465.5 H450.8 M447.2 467.5 H450.8" stroke="#777" stroke-width="1"/></svg>
<svg style="left:481px;top:459px;" width="16" height="15" viewBox="481 459 16 15"><rect x="482.8" y="460.6" width="12.4" height="11.6" fill="none" stroke="#666" stroke-width="1.2"/><path d="M486.6 460.6 V467.4 M490.8 460.6 V467.4 M482.8 467.4 H491.3" fill="none" stroke="#666" stroke-width="1.1"/></svg>
<div style="left:515px;top:466px;width:7.5px;height:1.2px;background:#444;"></div>
<div style="left:528.5px;top:466.2px;width:98.5px;height:1px;background:#444;"></div>
<div style="left:576px;top:461.5px;width:5px;height:12px;background:#444;"></div>
<div style="left:632.5px;top:466px;width:8px;height:1.2px;background:#444;"></div>
<div style="left:636px;top:462.5px;width:1.2px;height:8px;background:#444;"></div>
<span style="left:654.06px;top:461px;line-height:12px;font-size:11px;color:#3a3a3a;letter-spacing:-0.104px;">100%</span>
<div style="left:2px;top:2px;width:699px;height:477px;border:1px solid #217346;border-top:none;border-radius:7px;box-sizing:border-box;pointer-events:none"></div>
</div></body></html>
